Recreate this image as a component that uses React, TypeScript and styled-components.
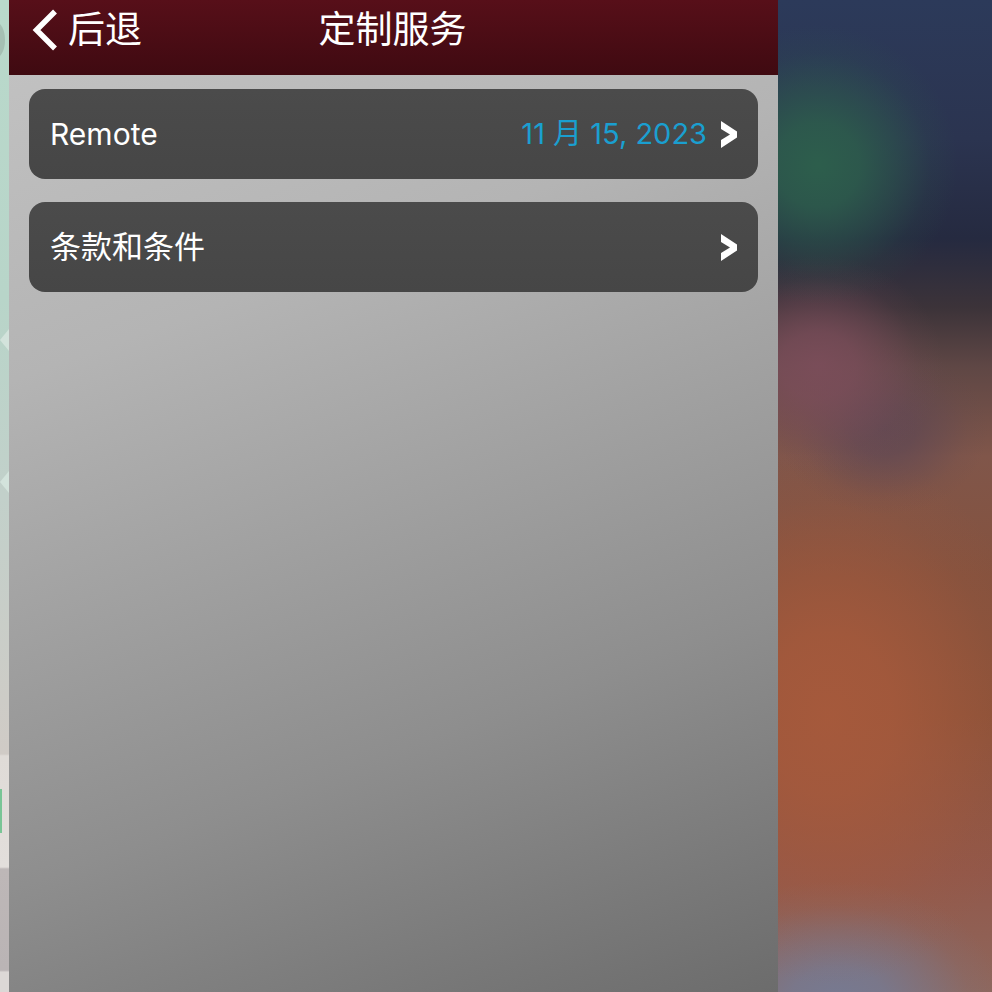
import styled, { createGlobalStyle } from "styled-components";

const GlobalStyle = createGlobalStyle`
    html, body {
        margin: 0;
        padding: 0;
        height: 100%;
        background: #8a8a8a;
    }
    body {
        font-family: "Inter", "Noto Sans CJK SC", sans-serif;
    }
`;

// soft round patch of colour for the blurred app behind the sheet
const blob = (rx: number, ry: number, x: number, y: number, rgb: string, a = 1) =>
    `radial-gradient(ellipse ${rx}px ${ry}px at ${x}px ${y}px,
        rgba(${rgb}, ${a}) 0%,
        rgba(${rgb}, ${a * 0.85}) 30%,
        rgba(${rgb}, ${a * 0.5}) 55%,
        rgba(${rgb}, ${a * 0.13}) 80%,
        rgba(${rgb}, 0) 100%)`;

const Screen = styled.div`
    display: flex;
    width: 992px;
    height: 992px;
    overflow: hidden;
`;

const LeftStrip = styled.div`
    flex: 0 0 9px;
    position: relative;
    overflow: hidden;
    background: linear-gradient(180deg,
        #b9d9cb 0%, #b8d5c9 30%, #c2d0ca 50%, #d0cbc6 76%,
        #dfdbd7 76.2%, #e2dedb 87.4%, #bdb7b7 87.6%, #bab4b5 97.8%, #dcd8d6 98%);
`;

const StripMark = styled.div`
    position: absolute;
    left: 0;
    top: 789px;
    width: 2px;
    height: 44px;
    background: #79c596;
`;

const StripDot = styled.div`
    position: absolute;
    left: -14px;
    top: 22px;
    width: 19px;
    height: 36px;
    border-radius: 50%;
    background: #a5bfb3;
`;

const StripArrow = styled.div<{ $top: number }>`
    position: absolute;
    left: 0;
    top: ${(p) => p.$top}px;
    width: 9px;
    height: 22px;
    clip-path: polygon(100% 0, 0 50%, 100% 100%);
    background: #d3e3dc;
`;

const Panel = styled.main`
    flex: 0 0 769px;
    display: flex;
    flex-direction: column;
    background: linear-gradient(160deg, #c4c4c4 0%, #b4b4b4 30%, #8e8e8e 70%, #6c6c6c 100%);
`;

const NavBar = styled.header`
    flex: 0 0 75px;
    box-sizing: border-box;
    display: grid;
    grid-template-columns: 1fr auto 1fr;
    align-items: center;
    padding: 0 25px 15px 23px;
    color: #fff;
    background: linear-gradient(180deg, #570f19 0%, #3f0a11 100%);
`;

const BackButton = styled.div`
    display: flex;
    align-items: center;
    gap: 10px;
    font-size: 37px;
    line-height: 44px;
`;

const Title = styled.h1`
    margin: 0;
    font-size: 37px;
    line-height: 44px;
    font-weight: 400;
`;

const RowList = styled.div`
    display: flex;
    flex-direction: column;
    gap: 23px;
    padding: 14px 20px 0;
`;

const Row = styled.div`
    height: 90px;
    box-sizing: border-box;
    display: flex;
    align-items: center;
    justify-content: space-between;
    padding: 0 21px;
    border-radius: 16px;
    background: linear-gradient(180deg, #4b4b4b 0%, #464646 100%);
`;

const RowLabel = styled.span<{ $size: number }>`
    color: #fff;
    font-size: ${(p) => p.$size}px;
    line-height: 40px;
`;

const RowValue = styled.div`
    display: flex;
    align-items: center;
    gap: 14px;
`;

const DateText = styled.span`
    color: #1a9fd0;
    font-size: 29px;
    line-height: 40px;
`;

const RightBlur = styled.div`
    flex: 1;
    background:
        ${blob(140, 140, 40, 165, "45, 94, 76")},
        ${blob(125, 110, 40, 365, "126, 78, 92", 0.85)},
        ${blob(105, 85, 105, 430, "92, 70, 84", 0.75)},
        ${blob(215, 270, 50, 715, "168, 90, 60", 0.9)},
        ${blob(165, 125, 60, 1005, "118, 122, 146")},
        linear-gradient(180deg, #2c3a5a 0%, #2b3450 14%, #252a40 24%, #3c3339 31%, #5f4745 37%, #80564a 46%, #85523e 58%, #8c5239 72%, #92584a 88%, #8e675d 100%);
`;

const Chevron = () => (
    <svg width="16" height="27" viewBox="0 0 16 27">
        <polygon points="0,0 16,10.5 16,16.5 0,27 0,19 9,13.5 0,8" fill="#fff" />
    </svg>
);

const BackChevron = () => (
    <svg width="26" height="42" viewBox="0 0 26 42">
        <path d="M23 2.5 L4.5 21 L23 39.5" fill="none" stroke="#fff" strokeWidth="5.5" />
    </svg>
);

export default function App() {
    return (
        <Screen>
            <GlobalStyle />
            <LeftStrip>
                <StripDot />
                <StripArrow $top={329} />
                <StripArrow $top={471} />
                <StripMark />
            </LeftStrip>
            <Panel>
                <NavBar>
                    <BackButton>
                        <BackChevron />
                        后退
                    </BackButton>
                    <Title>定制服务</Title>
                </NavBar>
                <RowList>
                    <Row>
                        <RowLabel $size={30}>Remote</RowLabel>
                        <RowValue>
                            <DateText>11 月 15, 2023</DateText>
                            <Chevron />
                        </RowValue>
                    </Row>
                    <Row>
                        <RowLabel $size={31}>条款和条件</RowLabel>
                        <RowValue>
                            <Chevron />
                        </RowValue>
                    </Row>
                </RowList>
            </Panel>
            <RightBlur />
        </Screen>
    );
}
